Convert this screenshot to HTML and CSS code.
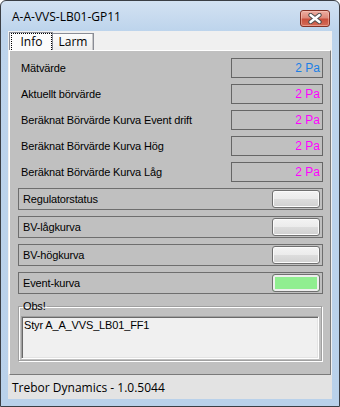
FILE: index.html
```html
<!DOCTYPE html>
<html>
<head>
<meta charset="utf-8">
<link rel="stylesheet" href="styles.css">
</head>
<body>
<div class="window">
  <div class="titlebar">
    <span class="title">A-A-VVS-LB01-GP11</span>
    <div class="close">
      <svg width="14" height="11" viewBox="0 0 14 11">
        <path d="M2.5 2 L11.5 9 M11.5 2 L2.5 9" stroke="#4e4e4e" stroke-width="4.4" stroke-linecap="round" fill="none"/>
        <path d="M2.5 2 L11.5 9 M11.5 2 L2.5 9" stroke="#ffffff" stroke-width="2.4" stroke-linecap="round" fill="none"/>
      </svg>
    </div>
  </div>
  <div class="client">
    <div class="tabs">
      <div class="tab active"><span class="focus">Info</span></div>
      <div class="tab">Larm</div>
    </div>
    <div class="page">
      <div class="vrow"><span class="label">Mätvärde</span><span class="value blue">2 Pa</span></div>
      <div class="vrow"><span class="label">Aktuellt börvärde</span><span class="value pink">2 Pa</span></div>
      <div class="vrow"><span class="label">Beräknat Börvärde Kurva Event drift</span><span class="value pink">2 Pa</span></div>
      <div class="vrow"><span class="label">Beräknat Börvärde Kurva Hög</span><span class="value pink">2 Pa</span></div>
      <div class="vrow"><span class="label">Beräknat Börvärde Kurva Låg</span><span class="value pink">2 Pa</span></div>
      <div class="grow"><span class="glabel">Regulatorstatus</span><span class="btn"></span></div>
      <div class="grow"><span class="glabel">BV-lågkurva</span><span class="btn"></span></div>
      <div class="grow"><span class="glabel">BV-högkurva</span><span class="btn"></span></div>
      <div class="grow"><span class="glabel">Event-kurva</span><span class="btn on"></span></div>
      <fieldset class="obs">
        <legend>Obs!</legend>
        <div class="textbox">Styr A_A_VVS_LB01_FF1</div>
      </fieldset>
    </div>
    <div class="status">Trebor Dynamics - 1.0.5044</div>
  </div>
</div>
</body>
</html>
```
FILE: styles.css
```css
html, body {
  margin: 0;
  padding: 0;
  background: #ffffff;
}
.window {
  width: 340px;
  height: 407px;
  box-sizing: border-box;
  border: 1px solid #3b3f45;
  border-radius: 6px 6px 0 0;
  padding: 0 7px 7px 7px;
  background: linear-gradient(#d3e2f2 0px, #bdd4ec 30px, #b9d1ea 100%);
  display: flex;
  flex-direction: column;
  font-family: "Liberation Sans", Arial, sans-serif;
  color: #000;
}
.titlebar {
  height: 30px;
  flex-shrink: 0;
  display: flex;
  align-items: flex-start;
}
.title {
  margin-top: 9px;
  padding-left: 4px;
  line-height: 14px;
  font-size: 12px;
  font-family: "Open Sans", "Liberation Sans", sans-serif;
}
.close {
  margin-left: auto;
  margin-top: 9px;
  margin-right: 2px;
  width: 30px;
  height: 17px;
  box-sizing: border-box;
  border: 1px solid #833226;
  border-radius: 3px;
  background: linear-gradient(#ecaea2 0%, #de8a7b 45%, #c9503d 55%, #d46c58 100%);
  box-shadow: inset 0 0 0 1px rgba(255, 210, 200, 0.45);
  display: flex;
  align-items: center;
  justify-content: center;
}
.close svg {
  display: block;
}
.client {
  flex: 1;
  background: #f0f0f0;
  display: flex;
  flex-direction: column;
  min-height: 0;
}
.tabs {
  height: 19px;
  flex-shrink: 0;
  display: flex;
  align-items: flex-end;
  padding-left: 1px;
  font-size: 12px;
  font-family: "Open Sans", "Liberation Sans", sans-serif;
}
.tab {
  box-sizing: border-box;
  border: 1px solid #898c95;
  border-bottom: none;
  border-left: none;
  height: 17px;
  width: 41px;
  display: flex;
  align-items: center;
  justify-content: center;
  line-height: 14px;
  background: linear-gradient(#fbfbfb, #ececec);
  box-shadow: inset -1px 0 0 #c8c8c8;
}
.tab.active {
  height: 18px;
  width: 44px;
  border-left: 1px solid #898c95;
  background: #fbfbfb;
  box-shadow: none;
  align-items: stretch;
  padding: 0 0 0 1px;
}
.focus {
  flex: 1;
  border: 1px dotted #000;
  border-bottom: none;
  display: flex;
  align-items: center;
  justify-content: center;
}
.page {
  flex: 1;
  margin: 0 1px;
  background: #c0c0c0;
  border: 1px solid;
  border-color: #ffffff #7a7a7a #7a7a7a #ffffff;
  padding: 7px 7px 0 8px;
  display: flex;
  flex-direction: column;
  gap: 6px;
  font-size: 11px;
  letter-spacing: -0.15px;
}
.vrow {
  height: 20px;
  display: flex;
  align-items: center;
}
.label {
  padding-left: 3px;
  flex: 1;
}
.value {
  box-sizing: border-box;
  width: 92px;
  height: 20px;
  border: 1px solid #666666;
  text-align: right;
  padding-right: 2px;
  line-height: 18px;
  font-size: 12px;
  letter-spacing: 0;
}
.blue {
  color: #1a7fe6;
}
.pink {
  color: #ff00ff;
}
.grow {
  box-sizing: border-box;
  height: 22px;
  border: 1px solid #6e6e6e;
  display: flex;
  align-items: center;
  padding: 0 2px 0 4px;
}
.glabel {
  flex: 1;
}
.btn {
  box-sizing: border-box;
  width: 48px;
  height: 18px;
  border: 1px solid #707070;
  border-radius: 3px;
  background: linear-gradient(#f3f3f3 0%, #ebebeb 50%, #dddddd 50%, #d0d0d0 100%);
  box-shadow: inset 0 0 0 1px #fbfbfb;
}
.btn.on {
  background: #90ee90;
  box-shadow: inset 0 0 0 2px #eeeeee;
}
.obs {
  margin: 0 1px 0 0;
  padding: 0 2px 1px 2px;
  border: 1px solid #a0a0a0;
  box-shadow: 1px 1px 0 #ffffff, inset 1px 1px 0 #ffffff;
  min-width: 0;
}
.obs legend {
  padding: 0 1px;
  margin-left: 1px;
  line-height: 13px;
  font-size: 11px;
}
.textbox {
  box-sizing: border-box;
  margin-top: 3px;
  height: 43px;
  background: #f0f0f0;
  border: 1px solid;
  border-color: #a0a0a0 #ffffff #ffffff #a0a0a0;
  box-shadow: inset 1px 1px 0 #696969, inset -1px -1px 0 #e3e3e3;
  padding: 2px 2px;
  line-height: 13px;
  font-size: 11px;
}
.status {
  height: 24px;
  flex-shrink: 0;
  box-sizing: border-box;
  background: #e3e3e3;
  padding: 3px 0 0 4px;
  line-height: 20px;
  font-size: 12px;
  font-family: "Open Sans", "Liberation Sans", sans-serif;
}
```
